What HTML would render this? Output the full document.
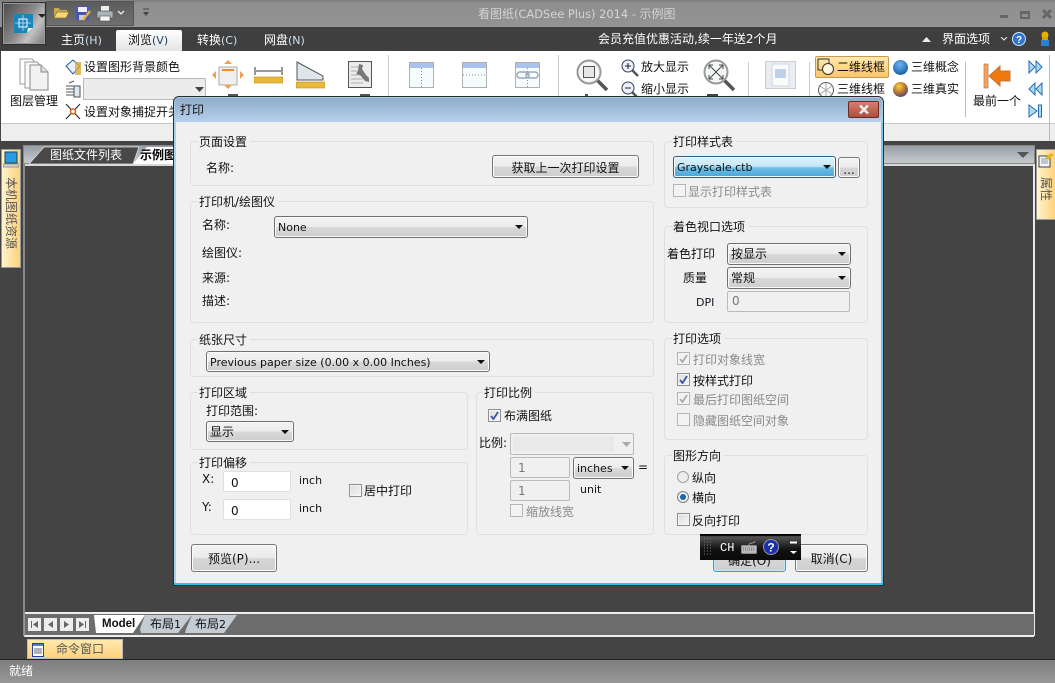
<!DOCTYPE html>
<html lang="zh"><head><meta charset="utf-8"><title>看图纸</title>
<style>
*{box-sizing:border-box}
html,body{margin:0;padding:0}
body{width:1055px;height:683px;overflow:hidden;position:relative;background:#444;font:12px "DejaVu Sans","WenQuanYi Zen Hei","Noto Sans CJK SC",sans-serif;color:#111}
.a,.t,.g,.b,.dd,.ed,.cb,svg{position:absolute}
.t{white-space:nowrap;line-height:16px;height:16px}
.dis{color:#8a8a8a}
.g{border:1px solid #d8e2e6;border-radius:4px}
.g>span{position:absolute;left:7px;top:-8px;background:#f0f0f0;padding:0 3px 0 1px;line-height:16px;white-space:nowrap;color:#111}
.b{border:1px solid #777;border-radius:3px;background:linear-gradient(#f2f2f2 0,#ececec 48%,#d6d6d6 52%,#cfcfcf 100%);text-align:center;box-shadow:inset 0 0 0 1px #fbfbfb;white-space:nowrap;padding-top:1px}
.dd{border:1px solid #707070;border-radius:3px;background:linear-gradient(#f2f2f2 0,#ececec 48%,#d8d8d8 52%,#cdcdcd 100%);padding-left:3px;line-height:21px;white-space:nowrap;box-shadow:inset 0 0 0 1px #fafafa}
.dd:after{content:"";position:absolute;right:4px;top:8px;border:4px solid transparent;border-top:4px solid #111;border-bottom:0}
.l{font-size:11px}
.ed{background:#f0f0f0;border:1px solid #bbb;border-radius:2px;color:#777;padding-left:7px;line-height:20px}
.wh{background:#fff;border-color:#dbe0e4;color:#111;line-height:22px}
.cb{width:13px;height:13px;border:1px solid #8e8f8f;background:linear-gradient(135deg,#dcdcdc,#f6f6f6);box-shadow:inset 0 0 0 1px #f4f4f4}
.cb.off{border-color:#b5b5b5;background:#f3f3f3}
.cb svg{left:1px;top:1px}
.tx{color:#fff}
.v{position:absolute;white-space:nowrap;writing-mode:vertical-rl;text-orientation:sideways;color:#555;line-height:12px;width:12px}
</style></head><body>

<!-- title bar -->
<div class="a" style="left:0;top:0;width:1055px;height:27px;background:linear-gradient(#7b7b7b 0,#8e8e8e 12%,#949494 100%)"></div>
<div class="a" style="left:46px;top:1px;width:88px;height:25px;background:linear-gradient(#5c5c5c,#6f6f6f);border:1px solid #555"></div>
<div class="t" style="left:478px;top:6px;color:#d4d4d4">看图纸<span style="font-size:11.4px">(CADSee Plus) 2014 - </span>示例图</div>
<div class="a" style="left:1000px;top:15px;width:8px;height:3px;background:#666"></div>
<div class="a" style="left:1020px;top:11px;width:10px;height:8px;border:2px solid #666;border-top-width:3px"></div>
<svg style="left:1041px;top:8px" width="12" height="12"><path d="M2 2L10 10M10 2L2 10" stroke="#666" stroke-width="3"/></svg>
<!-- quick access icons -->
<svg style="left:53px;top:5px" width="17" height="15"><path d="M1 3h5l1 2h7v2H5L2 13H1z" fill="#c9a94e"/><path d="M4 7h12l-3 6H1z" fill="#f5d778" stroke="#8d7330" stroke-width=".7"/></svg>
<svg style="left:75px;top:5px" width="17" height="17"><rect x="1" y="1" width="13" height="14" fill="#4a55b0"/><rect x="3" y="2" width="9" height="5" fill="#eef"/><rect x="4" y="10" width="6" height="5" fill="#ccd"/><path d="M8 15L15 6" stroke="#e0b040" stroke-width="2.5"/></svg>
<svg style="left:96px;top:5px" width="17" height="17"><rect x="5" y="1" width="8" height="6" fill="#eee"/><rect x="1" y="6" width="16" height="7" fill="#aab4bb" stroke="#555" stroke-width=".7"/><rect x="4" y="11" width="10" height="5" fill="#f5f5f5" stroke="#555" stroke-width=".6"/></svg>
<svg style="left:117px;top:10px" width="8" height="6"><path d="M1 1L4 4L7 1" stroke="#eee" fill="none" stroke-width="1.3"/></svg>
<svg style="left:142px;top:8px" width="8" height="9"><path d="M1 1h6" stroke="#444"/><path d="M1 4h6L4 8z" fill="#444"/></svg>

<!-- tab bar -->
<div class="a" style="left:0;top:27px;width:1055px;height:24px;background:#3f3f3f"></div>
<div class="a" style="left:116px;top:30px;width:66px;height:21px;background:linear-gradient(#fff,#e4e4e4);border-radius:2px 2px 0 0"></div>
<div class="t tx" style="left:61px;top:32px">主页<span class="l" style="color:#cfe0f0">(H)</span></div>
<div class="t" style="left:128px;top:32px">浏览<span class="l" style="color:#23415f">(V)</span></div>
<div class="t tx" style="left:197px;top:32px">转换<span class="l" style="color:#cfe0f0">(C)</span></div>
<div class="t tx" style="left:264px;top:32px">网盘<span class="l" style="color:#cfe0f0">(N)</span></div>
<div class="t tx" style="left:598px;top:31px">会员充值优惠活动,续一年送2个月</div>
<svg style="left:922px;top:36px" width="10" height="7"><path d="M0 6L4.500 1L9 6z" fill="#eee"/></svg>
<div class="t tx" style="left:942px;top:31px">界面选项</div>
<svg style="left:1000px;top:37px" width="8" height="5"><path d="M1 0L4 3L7 0" stroke="#eee" fill="none"/></svg>
<svg style="left:1012px;top:32px" width="14" height="14"><circle cx="7" cy="7" r="6.500" fill="#2d73d0" stroke="#cfe3fb"/><text x="7" y="11" font-size="10" font-weight="bold" fill="#fff" text-anchor="middle" font-family="Liberation Sans">?</text></svg>
<svg style="left:1038px;top:31px" width="14" height="16"><circle cx="7" cy="4" r="3.500" fill="#e7b000"/><rect x="4" y="6" width="6" height="3" fill="#d8a000"/><rect x="3" y="9" width="8" height="6" fill="#2f7fd0"/></svg>

<!-- app button -->
<div class="a" style="left:2px;top:2px;width:44px;height:43px;background:linear-gradient(125deg,#4a4a4a 0,#8b8b8b 50%,#c2c2c2 70%,#777 100%);border:1px solid #2e2e2e;box-shadow:inset 0 0 0 1px #999"></div>
<svg style="left:14px;top:14px" width="19" height="20"><path d="M0 0H19V14L13 19H0z" fill="#1e83b8"/><path d="M13 19L14 14H19z" fill="#f0f0f0"/><rect x="5" y="5" width="8" height="8" fill="none" stroke="#fff"/><path d="M9 1V17M1 9H17" stroke="#bfe6f8" stroke-width=".8"/></svg>
<svg style="left:38px;top:14px" width="8" height="5"><path d="M0 0H8L4 4z" fill="#222"/></svg>

<!-- ribbon -->
<div class="a" style="left:1px;top:51px;width:1054px;height:72px;background:#fff"></div>
<div class="a" style="left:1px;top:123px;width:1054px;height:18px;background:#eee;border-top:1px solid #c8c8c8"></div>
<div class="a" style="left:1049px;top:55px;width:1px;height:86px;background:#bbb"></div>

<svg style="left:19px;top:58px" width="32" height="34"><path d="M1 1h12l3 3v22H1z" fill="#fff" stroke="#999"/><path d="M6 4h12l3 3v23H6z" fill="#fafafa" stroke="#999"/><path d="M11 7h11l7 7v18H11z" fill="#f2f2f2" stroke="#888"/><path d="M22 7v7h7" fill="#ddd" stroke="#888"/></svg>
<div class="t" style="left:10px;top:93px">图层管理</div>
<svg style="left:65px;top:59px" width="17" height="17"><path d="M1 7L8 1L15 7L8 15z" fill="#e9f0f8" stroke="#2a5c9a"/><rect x="10" y="3" width="6" height="13" fill="#d8a93a" opacity=".8"/></svg>
<div class="t" style="left:84px;top:59px">设置图形背景颜色</div>
<svg style="left:65px;top:80px" width="16" height="18"><path d="M1 6h8M1 9h8M1 12h8M1 15h8M4 3L9 1" stroke="#555" fill="none"/><rect x="9" y="6" width="6" height="11" fill="#dfe8ef" stroke="#456"/></svg>
<div class="a" style="left:83px;top:78px;width:123px;height:22px;background:#ececec;border:1px solid #bbb"></div>
<svg style="left:195px;top:87px" width="9" height="5"><path d="M0 0H9L4.500 5z" fill="#444"/></svg>
<svg style="left:65px;top:103px" width="16" height="17"><path d="M1 1L15 16M15 1L1 16" stroke="#333" stroke-width="1.200"/><circle cx="8" cy="8.500" r="2.500" fill="#fff" stroke="#e05a10" stroke-width="1.500"/></svg>
<div class="t" style="left:84px;top:104px">设置对象捕捉开关</div>

<svg style="left:212px;top:60px" width="32" height="29"><rect x="7" y="7" width="18" height="18" fill="#f0f0f0" stroke="#aaa"/><path d="M10 10h12" stroke="#f08a2c" stroke-width="2"/><path d="M16 0L20 4H12zM16 29L12 25H20zM0 15L4 11V19zM32 15L28 11V19z" fill="#f2a04c"/></svg>
<svg style="left:254px;top:66px" width="29" height="18"><path d="M1 1V9M28 1V9M2 5H27" stroke="#333"/><rect x="0" y="11" width="29" height="6" fill="#e9b93b" stroke="#b98c1e" stroke-width=".6"/></svg>
<svg style="left:296px;top:61px" width="29" height="28"><path d="M1 1L27 15V19H1z" fill="#dfe6ea" stroke="#555"/><rect x="0" y="21" width="29" height="6" fill="#e9b93b" stroke="#b98c1e" stroke-width=".6"/></svg>
<svg style="left:348px;top:61px" width="25" height="28"><rect x="0.500" y="0.500" width="23" height="26" fill="#ececec" stroke="#555"/><path d="M3 6h10M3 10h12M3 14h12M3 18h12M3 22h12" stroke="#ccc" stroke-width="2"/><path d="M11 3l4 1-1 4 4 6 3 3v4l-4-1-5-6-4-1 2-3z" fill="#777"/></svg>
<div class="a" style="left:388px;top:55px;width:1px;height:41px;background:#ccc"></div>
<div class="a" style="left:558px;top:55px;width:1px;height:41px;background:#ccc"></div>
<!-- tops of labels just visible above the dialog -->
<div class="a" style="left:228px;top:94px;width:10px;height:2px;background:#555"></div>
<div class="a" style="left:360px;top:94px;width:10px;height:2px;background:#555"></div>
<div class="a" style="left:585px;top:94px;width:3px;height:2px;background:#555"></div>
<div class="a" style="left:707px;top:94px;width:11px;height:2px;background:#444"></div>

<svg style="left:409px;top:62px" width="26" height="27"><rect x=".5" y=".5" width="24" height="25" fill="#f6fbfe" stroke="#b0b0b0"/><rect x="1" y="1" width="23" height="5" fill="#a9c3ee"/><path d="M12.500 6V25" stroke="#888" stroke-dasharray="1 2"/></svg>
<svg style="left:462px;top:62px" width="26" height="27"><rect x=".5" y=".5" width="24" height="25" fill="#f6fbfe" stroke="#b0b0b0"/><rect x="1" y="1" width="23" height="5" fill="#a9c3ee"/><path d="M1 13H24" stroke="#888" stroke-dasharray="1 2"/></svg>
<svg style="left:515px;top:62px" width="26" height="27"><rect x=".5" y=".5" width="24" height="25" fill="#f6fbfe" stroke="#b0b0b0"/><rect x="1" y="1" width="23" height="5" fill="#a9c3ee"/><path d="M12.500 6V25" stroke="#888" stroke-dasharray="1 2"/><rect x="2" y="10" width="12" height="6" rx="3" fill="none" stroke="#9ab" stroke-width="1.500"/><rect x="11" y="10" width="12" height="6" rx="3" fill="none" stroke="#9ab" stroke-width="1.500"/></svg>

<svg style="left:576px;top:59px" width="33" height="33"><path d="M21 21L31 31" stroke="#555" stroke-width="3.500"/><circle cx="13" cy="13" r="11.500" fill="#f4f7f7" stroke="#999" stroke-width="2"/><rect x="7.500" y="7.500" width="11" height="11" fill="#e6e6e6" stroke="#555"/></svg>
<svg style="left:621px;top:59px" width="18" height="18"><path d="M11 11L17 17" stroke="#555" stroke-width="2.500"/><circle cx="7" cy="7" r="6" fill="#eef" stroke="#345"/><path d="M4 7H10M7 4V10" stroke="#222"/></svg>
<div class="t" style="left:641px;top:59px">放大显示</div>
<svg style="left:621px;top:81px" width="18" height="17"><path d="M11 11L17 17" stroke="#555" stroke-width="2.500"/><circle cx="7" cy="7" r="6" fill="#eef" stroke="#345"/><path d="M4 7H10" stroke="#222"/></svg>
<div class="t" style="left:641px;top:81px">缩小显示</div>
<svg style="left:703px;top:59px" width="33" height="33"><path d="M21 21L31 31" stroke="#555" stroke-width="3.500"/><circle cx="13" cy="13" r="11.500" fill="#f4f7f7" stroke="#999" stroke-width="2"/><path d="M6 6L20 20M20 6L6 20M6 6h4M6 6v4M20 6h-4M20 6v4M6 20h4M6 20v-4M20 20h-4M20 20v-4" stroke="#444" fill="none"/></svg>
<div class="a" style="left:748px;top:62px;width:1px;height:34px;background:#ccc"></div>
<svg style="left:765px;top:61px" width="32" height="29"><rect x=".5" y=".5" width="30" height="27" fill="#e8eef4" stroke="#ccc"/><rect x="7" y="3" width="17" height="22" fill="#fbfbfb" stroke="#cfd6dc"/><rect x="10" y="8" width="11" height="9" fill="#bcd2e8"/></svg>
<div class="a" style="left:809px;top:62px;width:1px;height:34px;background:#ccc"></div>

<div class="a" style="left:815px;top:56px;width:74px;height:22px;background:linear-gradient(#ffeab0,#fcc56a);border:1px solid #c69a55;border-radius:2px"></div>
<svg style="left:817px;top:58px" width="18" height="18"><rect x="1" y="1" width="11" height="11" fill="none" stroke="#333"/><circle cx="11" cy="11" r="5.500" fill="#fff6dd" stroke="#333"/></svg>
<div class="t" style="left:837px;top:59px">二维线框</div>
<svg style="left:817px;top:81px" width="18" height="18"><circle cx="9" cy="9" r="7.500" fill="#fff" stroke="#555"/><path d="M3 5L15 13M3 13L15 5M9 1.500V16" stroke="#aaa"/></svg>
<div class="t" style="left:837px;top:81px">三维线框</div>
<div class="a" style="left:893px;top:60px;width:15px;height:15px;border-radius:50%;background:radial-gradient(circle at 45% 30%,#6db3ee,#1e62ae 75%)"></div>
<div class="t" style="left:911px;top:59px">三维概念</div>
<div class="a" style="left:893px;top:82px;width:15px;height:15px;border-radius:50%;background:radial-gradient(circle at 40% 30%,#ffd23c,#b7762e 45%,#3a3a9a 85%)"></div>
<div class="t" style="left:911px;top:81px">三维真实</div>
<div class="a" style="left:965px;top:62px;width:1px;height:55px;background:#bbb"></div>
<svg style="left:983px;top:63px" width="28" height="26"><rect x="1" y="1" width="4" height="24" fill="#f0a564" stroke="#c8753a" stroke-width=".7"/><path d="M6 13L17 3V8H27V18H17V23z" fill="#ee7a10" stroke="#c8753a"/></svg>
<div class="t" style="left:973px;top:93px">最前一个</div>
<svg style="left:1028px;top:60px" width="15" height="14"><path d="M1 1L7 7L1 13zM8 1L14 7L8 13z" fill="#a8dcf6" stroke="#2a6ab5"/></svg>
<svg style="left:1028px;top:82px" width="15" height="14"><path d="M7 1L1 7L7 13zM14 1L8 7L14 13z" fill="#a8dcf6" stroke="#2a6ab5"/></svg>
<svg style="left:1028px;top:104px" width="15" height="14"><path d="M1 1L9 7L1 13z" fill="#a8dcf6" stroke="#2a6ab5"/><rect x="10.500" y="1" width="3" height="12" fill="#a8dcf6" stroke="#2a6ab5"/></svg>

<div class="a" style="left:0;top:141px;width:1055px;height:542px;background:#444"></div>

<!-- doc area -->
<div class="a" style="left:23px;top:145px;width:1012px;height:19px;background:linear-gradient(#97a0a8,#c6cacc);border:1px solid #888"></div>
<div class="a" style="left:23px;top:164px;width:1012px;height:2px;background:#d8d8d8"></div>
<div class="a" style="left:23px;top:164px;width:2px;height:472px;background:#8a8a8a"></div>
<div class="a" style="left:1033px;top:164px;width:2px;height:472px;background:#e8e8e8"></div>
<div class="a" style="left:25px;top:612px;width:1008px;height:2px;background:#eee"></div>
<svg style="left:29px;top:146px" width="150" height="19"><path d="M0 18L15 1H110L104 18z" fill="#484848" stroke="#ddd" stroke-width=".8"/><path d="M104 18L118 1H150V18z" fill="#fff"/></svg>
<div class="t" style="left:50px;top:147px;color:#fff">图纸文件列表</div>
<div class="t" style="left:140px;top:147px;font-weight:bold;color:#000">示例图</div>
<svg style="left:1017px;top:152px" width="12" height="7"><path d="M0 0H12L6 6z" fill="#555"/></svg>

<!-- left side tab -->
<div class="a" style="left:1px;top:149px;width:20px;height:119px;background:linear-gradient(90deg,#fff3cf,#fdd27c);border:1px solid #999"></div>
<svg style="left:3px;top:151px" width="16" height="17"><rect x="2" y="1" width="12" height="11" fill="#2b9be6" stroke="#244"/><rect x="0" y="13" width="16" height="3" fill="#cfd6da" stroke="#555" stroke-width=".5"/></svg>
<div class="v" style="left:5px;top:177px">本机图纸资源</div>

<!-- right side tab -->
<div class="a" style="left:1036px;top:149px;width:19px;height:71px;background:linear-gradient(90deg,#fff3cf,#fdd27c);border:1px solid #999;border-right:0"></div>
<svg style="left:1038px;top:152px" width="17" height="16"><rect x="1" y="4" width="11" height="11" fill="#f4f4f4" stroke="#345"/><path d="M3 7h7M3 9h7M3 11h7" stroke="#89a"/><path d="M7 6L13 1L16 3L10 8z" fill="#e6b422"/></svg>
<div class="v" style="left:1040px;top:177px">属性</div>

<!-- bottom tabs -->
<div class="a" style="left:24px;top:614px;width:1010px;height:23px;background:#6c6c6c;border-bottom:2px solid #eee;border-left:1px solid #999"></div>
<div class="a" style="left:28px;top:618px;width:13px;height:13px;background:#eee"></div>
<div class="a" style="left:44px;top:618px;width:13px;height:13px;background:#eee"></div>
<div class="a" style="left:60px;top:618px;width:13px;height:13px;background:#eee"></div>
<div class="a" style="left:76px;top:618px;width:13px;height:13px;background:#eee"></div>
<svg style="left:28px;top:618px" width="62" height="13"><path d="M3.500 3V10" stroke="#666"/><path d="M10 3L5 6.500L10 10zM25 3L20 6.500L25 10zM36 3L41 6.500L36 10zM51 3L56 6.500L51 10z" fill="#666"/><path d="M57.500 3V10" stroke="#666"/></svg>
<svg style="left:94px;top:615px" width="146" height="20"><path d="M0 0H51L39 18H2z" fill="#fff"/><path d="M51 0H98L84 18H47L46 14z" fill="#c3cdd3"/><path d="M98 0H143L130 18H91L92 14z" fill="#c3cdd3"/></svg>
<div class="t" style="left:102px;top:616px;font:bold 11.500px/16px 'Liberation Sans',sans-serif;color:#111">Model</div>
<div class="t" style="left:150px;top:616px">布局<span class="l">1</span></div>
<div class="t" style="left:195px;top:616px">布局<span class="l">2</span></div>

<div class="a" style="left:27px;top:639px;width:96px;height:20px;background:linear-gradient(#ffe9ad,#fdd27c);border:1px solid #bbb"></div>
<svg style="left:32px;top:643px" width="13" height="15"><rect x=".5" y=".5" width="11" height="13" fill="#fff" stroke="#23409a"/><rect x="1" y="1" width="10" height="2" fill="#5478d8"/><path d="M2 6h8M2 8h8M2 10h8" stroke="#667"/></svg>
<div class="t" style="left:56px;top:641px;color:#555">命令窗口</div>

<!-- status bar -->
<div class="a" style="left:0;top:659px;width:1055px;height:24px;background:linear-gradient(#7e7e7e,#979797);border-top:1px solid #222"></div>
<div class="t tx" style="left:9px;top:663px">就绪</div>

<!-- DIALOG -->
<div class="a" style="left:173px;top:96px;width:711px;height:490px;background:#f0f0f0;border:1px solid #2a2a2a;border-radius:6px 6px 0 0;box-shadow:inset 0 0 0 2px #a8cbe6"></div>
<div class="a" style="left:175px;top:98px;width:707px;height:24px;background:linear-gradient(#8facca,#b4d0ea);border-radius:4px 4px 0 0"></div>
<div class="a" style="left:174px;top:122px;width:2px;height:461px;background:#a9d2ec"></div>
<div class="a" style="left:881px;top:122px;width:2px;height:461px;background:#79c3ea"></div>
<div class="a" style="left:174px;top:583px;width:709px;height:2px;background:#2fc0ea"></div>
<div class="t" style="left:180px;top:102px">打印</div>
<div class="a" style="left:848px;top:101px;width:31px;height:17px;background:linear-gradient(#d5806f,#b04e3a);border:1px solid #6a2a25;border-radius:2px"></div>
<svg style="left:858px;top:104px" width="12" height="11"><path d="M2 1.500L10 9.500M10 1.500L2 9.500" stroke="#eee" stroke-width="2.500"/></svg>

<div class="g" style="left:190px;top:141px;width:464px;height:45px"><span>页面设置</span></div>
<div class="t" style="left:206px;top:160px">名称:</div>
<div class="b" style="left:492px;top:155px;width:147px;height:23px;line-height:22px">获取上一次打印设置</div>

<div class="g" style="left:190px;top:201px;width:464px;height:122px"><span>打印机/绘图仪</span></div>
<div class="t" style="left:202px;top:217px">名称:</div>
<div class="dd l" style="left:274px;top:216px;width:254px;height:22px">None</div>
<div class="t" style="left:202px;top:245px">绘图仪:</div>
<div class="t" style="left:202px;top:270px">来源:</div>
<div class="t" style="left:202px;top:293px">描述:</div>

<div class="g" style="left:190px;top:339px;width:464px;height:38px"><span>纸张尺寸</span></div>
<div class="dd l" style="left:206px;top:351px;width:284px;height:21px">Previous paper size (0.00 x 0.00 Inches)</div>

<div class="g" style="left:190px;top:392px;width:278px;height:58px"><span>打印区域</span></div>
<div class="t" style="left:206px;top:403px">打印范围:</div>
<div class="dd" style="left:206px;top:421px;width:88px;height:21px">显示</div>

<div class="g" style="left:190px;top:462px;width:278px;height:73px"><span>打印偏移</span></div>
<div class="t" style="left:202px;top:471px">X:</div>
<div class="ed wh" style="left:223px;top:471px;width:68px;height:21px">0</div>
<div class="t l" style="left:299px;top:473px">inch</div>
<div class="t" style="left:202px;top:499px">Y:</div>
<div class="ed wh" style="left:223px;top:499px;width:68px;height:21px">0</div>
<div class="t l" style="left:299px;top:501px">inch</div>
<div class="cb" style="left:349px;top:484px"></div>
<div class="t" style="left:364px;top:483px">居中打印</div>

<div class="g" style="left:476px;top:392px;width:178px;height:143px"><span style="left:6px">打印比例</span></div>
<div class="cb" style="left:488px;top:409px"><svg width="9" height="9"><path d="M1 5L3.500 8L8 1" stroke="#3a56a0" stroke-width="1.800" fill="none"/></svg></div>
<div class="t" style="left:504px;top:408px">布满图纸</div>
<div class="t" style="left:479px;top:435px">比例:</div>
<div class="ed" style="left:510px;top:433px;width:124px;height:22px"></div>
<div class="a" style="left:513px;top:436px;width:101px;height:16px;background:#e9e9e9"></div>
<svg style="left:622px;top:442px" width="9" height="5"><path d="M0 0H9L4.500 5z" fill="#aaa"/></svg>
<div class="ed" style="left:510px;top:457px;width:60px;height:21px">1</div>
<div class="dd l" style="left:573px;top:457px;width:61px;height:22px">inches</div>
<div class="t" style="left:638px;top:459px">=</div>
<div class="ed" style="left:510px;top:480px;width:60px;height:21px">1</div>
<div class="t l" style="left:580px;top:482px">unit</div>
<div class="cb off" style="left:510px;top:504px"></div>
<div class="t dis" style="left:526px;top:504px">缩放线宽</div>

<div class="b" style="left:191px;top:544px;width:86px;height:28px;line-height:27px">预览(P)...</div>

<div class="g" style="left:664px;top:141px;width:204px;height:67px"><span>打印样式表</span></div>
<div class="dd l" style="left:673px;top:156px;width:163px;height:22px;background:linear-gradient(#dff3fb 0,#c4e8f7 45%,#6fc0e6 55%,#49a3d6 100%);border-color:#2d5f85">Grayscale.ctb</div>
<div class="b" style="left:838px;top:157px;width:22px;height:21px;line-height:22px">...</div>
<div class="cb off" style="left:673px;top:184px"></div>
<div class="t dis" style="left:688px;top:184px">显示打印样式表</div>

<div class="g" style="left:664px;top:226px;width:204px;height:97px"><span>着色视口选项</span></div>
<div class="t" style="left:667px;top:246px">着色打印</div>
<div class="dd" style="left:727px;top:243px;width:124px;height:22px">按显示</div>
<div class="t" style="left:683px;top:270px">质量</div>
<div class="dd" style="left:727px;top:267px;width:124px;height:22px">常规</div>
<div class="t l" style="left:696px;top:295px;color:#112">DPI</div>
<div class="ed" style="left:727px;top:291px;width:123px;height:21px;padding-left:4px;line-height:18px">0</div>

<div class="g" style="left:664px;top:338px;width:204px;height:102px"><span>打印选项</span></div>
<div class="cb off" style="left:677px;top:352px"><svg width="9" height="9"><path d="M1 5L3.500 8L8 1" stroke="#aaa" stroke-width="1.800" fill="none"/></svg></div>
<div class="t dis" style="left:693px;top:352px">打印对象线宽</div>
<div class="cb" style="left:677px;top:373px"><svg width="9" height="9"><path d="M1 5L3.500 8L8 1" stroke="#3a56a0" stroke-width="1.800" fill="none"/></svg></div>
<div class="t" style="left:693px;top:373px">按样式打印</div>
<div class="cb off" style="left:677px;top:392px"><svg width="9" height="9"><path d="M1 5L3.500 8L8 1" stroke="#aaa" stroke-width="1.800" fill="none"/></svg></div>
<div class="t dis" style="left:693px;top:392px">最后打印图纸空间</div>
<div class="cb off" style="left:677px;top:413px"></div>
<div class="t dis" style="left:693px;top:413px">隐藏图纸空间对象</div>

<div class="g" style="left:664px;top:455px;width:204px;height:80px"><span>图形方向</span></div>
<svg style="left:676px;top:470px" width="14" height="14"><circle cx="7" cy="7" r="5.500" fill="#eee" stroke="#a0a0a0"/></svg>
<div class="t" style="left:692px;top:470px">纵向</div>
<svg style="left:676px;top:490px" width="14" height="14"><circle cx="7" cy="7" r="5.500" fill="#eee" stroke="#808080"/><circle cx="7" cy="7" r="3" fill="#1766b0"/></svg>
<div class="t" style="left:692px;top:490px">横向</div>
<div class="cb" style="left:677px;top:513px"></div>
<div class="t" style="left:692px;top:513px">反向打印</div>

<div class="b" style="left:713px;top:544px;width:73px;height:28px;line-height:30px;border:1px solid #2fa3d6;box-shadow:inset 0 0 0 1px #bfe8fa">确定(O)</div>
<div class="b" style="left:795px;top:544px;width:73px;height:28px;line-height:27px">取消(C)</div>

<!-- IME bar -->
<div class="a" style="left:700px;top:534px;width:101px;height:26px;background:linear-gradient(#000 0,#000 6%,#555 10%,#2a2a2a 40%,#111 60%,#0a0a0a 100%)"></div>
<svg style="left:703px;top:538px" width="10" height="20"><path d="M1 1h8M1 4h8M1 7h8M1 10h8M1 13h8M1 16h8" stroke="#777" stroke-dasharray="1 2"/></svg>
<div class="t" style="left:720px;top:540px;color:#fff;font-family:'Liberation Mono',monospace;font-size:12px">CH</div>
<svg style="left:741px;top:541px" width="17" height="14"><path d="M8 4C8 1 14 3 14 0" stroke="#999" fill="none"/><rect x=".5" y="4.500" width="15" height="8" rx="1" fill="#bbb" stroke="#888"/><path d="M2 7h12M2 9h12" stroke="#666" stroke-dasharray="1 1"/></svg>
<svg style="left:763px;top:539px" width="17" height="17"><circle cx="8" cy="8" r="7.500" fill="#1a2fb0" stroke="#999"/><text x="8" y="12.500" font-size="12" font-weight="bold" fill="#fff" text-anchor="middle" font-family="Liberation Sans">?</text></svg>
<svg style="left:789px;top:541px" width="9" height="14"><path d="M1 1.500H8" stroke="#fff" stroke-width="2"/><path d="M1 10H8L4.500 13z" fill="#fff"/></svg>

</body></html>
